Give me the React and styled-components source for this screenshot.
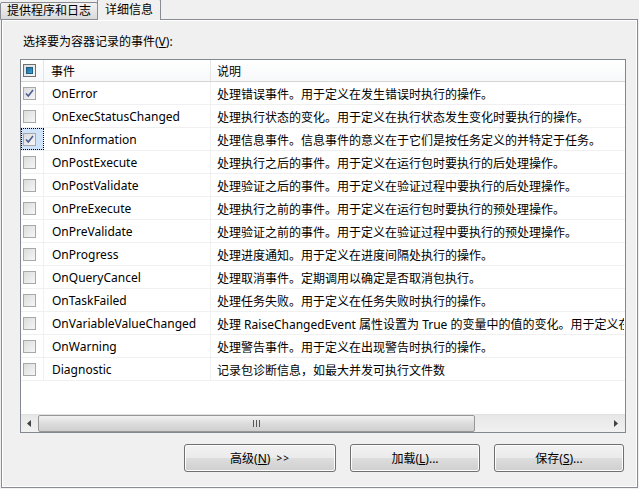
import React from "react";
import styled, { createGlobalStyle } from "styled-components";

const GlobalStyle = createGlobalStyle`
  html, body {
    margin: 0;
    padding: 0;
    background: #f0f0f0;
  }
  body {
    font-family: "Noto Sans", "Noto Sans CJK SC", sans-serif;
    font-size: 12px;
    color: #000;
  }
`;

const events = [
  { name: "OnError", desc: "处理错误事件。用于定义在发生错误时执行的操作。", checked: true },
  { name: "OnExecStatusChanged", desc: "处理执行状态的变化。用于定义在执行状态发生变化时要执行的操作。" },
  { name: "OnInformation", desc: "处理信息事件。信息事件的意义在于它们是按任务定义的并特定于任务。", checked: true, focused: true },
  { name: "OnPostExecute", desc: "处理执行之后的事件。用于定义在运行包时要执行的后处理操作。" },
  { name: "OnPostValidate", desc: "处理验证之后的事件。用于定义在验证过程中要执行的后处理操作。" },
  { name: "OnPreExecute", desc: "处理执行之前的事件。用于定义在运行包时要执行的预处理操作。" },
  { name: "OnPreValidate", desc: "处理验证之前的事件。用于定义在验证过程中要执行的预处理操作。" },
  { name: "OnProgress", desc: "处理进度通知。用于定义在进度间隔处执行的操作。" },
  { name: "OnQueryCancel", desc: "处理取消事件。定期调用以确定是否取消包执行。" },
  { name: "OnTaskFailed", desc: "处理任务失败。用于定义在任务失败时执行的操作。" },
  { name: "OnVariableValueChanged", desc: "处理 RaiseChangedEvent 属性设置为 True 的变量中的值的变化。用于定义在变量值变化时执行的操作。" },
  { name: "OnWarning", desc: "处理警告事件。用于定义在出现警告时执行的操作。" },
  { name: "Diagnostic", desc: "记录包诊断信息，如最大并发可执行文件数" },
];

const Dialog = styled.div`
  width: 639px;
  height: 489px;
  display: flex;
  flex-direction: column;
  overflow: hidden;
`;

const TabStrip = styled.div`
  display: flex;
  align-items: flex-end;
  height: 20px;
  position: relative;
  z-index: 1;
`;

const Tab = styled.div`
  height: ${({ $active }) => ($active ? "21px" : "18px")};
  padding: 0 ${({ $active }) => ($active ? "7px" : "6px")};
  margin-left: ${({ $active }) => ($active ? "-1px" : "0")};
  box-sizing: border-box;
  border: 1px solid #898c95;
  border-bottom: ${({ $active }) => ($active ? "none" : "1px solid #898c95")};
  border-radius: 2px 2px 0 0;
  background: ${({ $active }) =>
    $active ? "#f0f0f0" : "linear-gradient(#f2f2f2, #e6e6e6 50%, #d9d9d9)"};
  display: flex;
  align-items: center;
  line-height: 16px;
  font-size: 12px;
  white-space: nowrap;
`;

const Panel = styled.div`
  flex: 1;
  margin: -1px 1px 1px 1px;
  border: 1px solid #898c95;
  box-shadow: inset 1px 1px 0 #fff, inset -1px -1px 0 #fff;
  background: #f0f0f0;
  padding: 14px 11px 0 18px;
  display: flex;
  flex-direction: column;
`;

const Label = styled.div`
  height: 16px;
  line-height: 16px;
  padding-left: 3px;
  margin-bottom: 9px;

  u {
    text-decoration: underline;
  }
`;

const ListBox = styled.div`
  width: 606px;
  height: 374px;
  box-sizing: border-box;
  border: 1px solid #828790;
  background: #fff;
  display: flex;
  flex-direction: column;
  overflow: hidden;
`;

const Rows = styled.div`
  flex: 1;
  overflow: hidden;
`;

const Row = styled.div`
  display: grid;
  grid-template-columns: 23px 167px 1fr;
  height: ${({ $header }) => ($header ? "22px" : "23px")};
  box-sizing: border-box;
  border-bottom: 1px solid ${({ $header }) => ($header ? "#d5d5d5" : "#f0f0f0")};
  background: ${({ $header }) => ($header ? "linear-gradient(#ffffff, #f7f8fa)" : "#fff")};
  white-space: nowrap;
`;

const Cell = styled.div`
  display: flex;
  align-items: center;
  overflow: hidden;
  padding-left: ${({ $pad }) => $pad || 0}px;
  padding-top: 1px;
  border-right: 1px solid ${({ $line }) => $line || "transparent"};
  box-sizing: border-box;
`;

const CheckCell = styled(Cell)`
  padding-left: 2px;
  padding-top: 0;
  ${({ $focused }) =>
    $focused &&
    `
    background: #cfe3fa;
    outline: 1px dotted #000;
    outline-offset: -1px;
  `}
`;

const Box = styled.span`
  width: 13px;
  height: 13px;
  box-sizing: border-box;
  border: 1px solid ${({ $strong }) => ($strong ? "#707070" : "#a8a8a8")};
  background: linear-gradient(135deg, #dcdcdc, #f6f6f6);
  display: flex;
  align-items: center;
  justify-content: center;
`;

const Fill = styled.span`
  width: 7px;
  height: 7px;
  background: linear-gradient(135deg, #1c6da8, #3fa0c8);
  border: 1px solid #1d5e86;
  box-sizing: border-box;
`;

const HScroll = styled.div`
  height: 17px;
  display: flex;
  background: linear-gradient(#e7e7e7, #f1f1f1);
  border-top: 1px solid #e0e0e0;
`;

const ArrowButton = styled.div`
  width: 17px;
  display: flex;
  align-items: center;
  justify-content: center;
`;

const Track = styled.div`
  flex: 1;
  display: flex;
`;

const Thumb = styled.div`
  width: 437px;
  box-sizing: border-box;
  border: 1px solid #979797;
  border-radius: 2px;
  background: linear-gradient(#f2f2f2, #dcdcdc 50%, #cfcfcf);
  display: flex;
  align-items: center;
  justify-content: center;
`;

const Grip = styled.span`
  width: 7px;
  height: 7px;
  border-left: 1px solid #555;
  border-right: 1px solid #555;
  box-sizing: border-box;
  position: relative;

  &::after {
    content: "";
    position: absolute;
    left: 2px;
    top: 0;
    width: 1px;
    height: 7px;
    background: #555;
  }
`;

const ButtonRow = styled.div`
  display: flex;
  justify-content: flex-end;
  gap: 12px;
  margin-top: 11px;
  padding-right: 2px;
`;

const Button = styled.div`
  width: ${({ $w }) => $w}px;
  height: 28px;
  box-sizing: border-box;
  border: 1px solid #707070;
  border-radius: 3px;
  background: linear-gradient(#f2f2f2, #ebebeb 50%, #dddddd 51%, #cfcfcf);
  box-shadow: inset 0 0 0 1px #fcfcfc;
  display: flex;
  align-items: center;
  justify-content: center;
  font-size: 12px;
  white-space: nowrap;

  & + & {
    margin-left: ${({ $gap }) => $gap || 0}px;
  }
`;

const Small = styled.span`
  font-size: 10px;
  margin-left: 6px;
  letter-spacing: 1px;
`;

function CheckBox({ checked, indeterminate, strong }) {
  return (
    <Box $strong={strong}>
      {indeterminate && <Fill />}
      {checked && (
        <svg width="9" height="9" viewBox="0 0 9 9">
          <path d="M1 4.5 L3.3 7 L8 1" fill="none" stroke="#4a5f97" strokeWidth="1.6" />
        </svg>
      )}
    </Box>
  );
}

export default function App() {
  return (
    <Dialog>
      <GlobalStyle />
      <TabStrip>
        <Tab>提供程序和日志</Tab>
        <Tab $active>详细信息</Tab>
      </TabStrip>
      <Panel>
        <Label>
          选择要为容器记录的事件(<u>V</u>):
        </Label>
        <ListBox>
          <Rows>
            <Row $header>
              <CheckCell $line="#e5e5e5">
                <CheckBox indeterminate strong />
              </CheckCell>
              <Cell $pad={7} $line="#e5e5e5">事件</Cell>
              <Cell $pad={6}>说明</Cell>
            </Row>
            {events.map((e) => (
              <Row key={e.name}>
                <CheckCell $focused={e.focused} $line="#f0f0f0">
                  <CheckBox checked={e.checked} />
                </CheckCell>
                <Cell $pad={8} $line="#f0f0f0">{e.name}</Cell>
                <Cell $pad={6}>{e.desc}</Cell>
              </Row>
            ))}
          </Rows>
          <HScroll>
            <ArrowButton>
              <svg width="5" height="7" viewBox="0 0 5 7">
                <path d="M4 0 L0 3.5 L4 7 Z" fill="#404040" />
              </svg>
            </ArrowButton>
            <Track>
              <Thumb>
                <Grip />
              </Thumb>
            </Track>
            <ArrowButton>
              <svg width="5" height="7" viewBox="0 0 5 7">
                <path d="M0 0 L4 3.5 L0 7 Z" fill="#404040" />
              </svg>
            </ArrowButton>
          </HScroll>
        </ListBox>
        <ButtonRow>
          <Button $w={152}>
            高级(<u>N</u>)<Small>&gt;&gt;</Small>
          </Button>
          <Button $w={130}>
            加载(<u>L</u>)...
          </Button>
          <Button $w={130} $gap={2}>
            保存(<u>S</u>)...
          </Button>
        </ButtonRow>
      </Panel>
    </Dialog>
  );
}
